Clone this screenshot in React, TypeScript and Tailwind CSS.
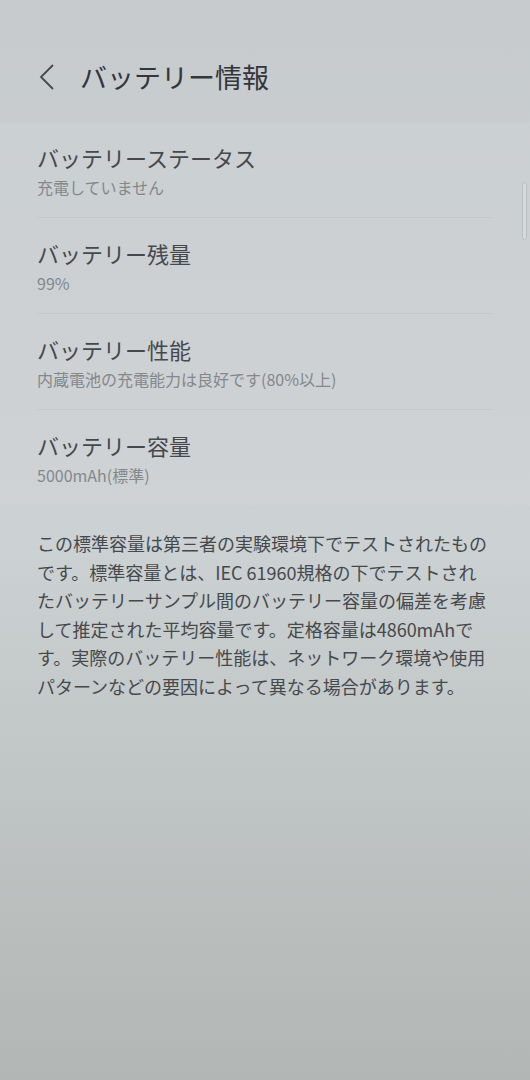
const font = { fontFamily: '"Noto Sans CJK JP", "Noto Sans", sans-serif' };

interface RowProps {
    title: string;
    sub: string;
    last?: boolean;
}

function InfoRow({ title, sub, last = false }: RowProps) {
    return (
        <div className={`pt-[21px] pb-[20px] ${last ? '' : 'border-b border-[#c3c8cb]'}`}>
            <div className="text-[22px] leading-[28px] text-[#45494c]">{title}</div>
            <div className="mt-[6px] text-[16px] leading-[20px] text-[#82888c]">{sub}</div>
        </div>
    );
}

const rows = [
    { title: 'バッテリーステータス', sub: '充電していません' },
    { title: 'バッテリー残量', sub: '99%' },
    { title: 'バッテリー性能', sub: '内蔵電池の充電能力は良好です(80%以上)' },
    { title: 'バッテリー容量', sub: '5000mAh(標準)' },
];

const lines = [
    'この標準容量は第三者の実験環境下でテストされたもの',
    'です。標準容量とは、IEC 61960規格の下でテストされ',
    'たバッテリーサンプル間のバッテリー容量の偏差を考慮',
    'して推定された平均容量です。定格容量は4860mAhで',
    'す。実際のバッテリー性能は、ネットワーク環境や使用',
    'パターンなどの要因によって異なる場合があります。',
];

export default function App() {
    return (
        <div
            className="relative w-[530px] h-[1080px] overflow-hidden bg-gradient-to-b from-[#c7cbce] via-[#ccd1d3] to-[#b2b6b4]"
            style={font}
        >
            {/* Header */}
            <div className="mt-[57px] h-[40px] flex items-center pl-[38px]">
                <svg width="18" height="28" viewBox="0 0 18 28" fill="none" className="text-[#45494c]">
                    <path d="M15 2 L3 14 L15 26" stroke="currentColor" strokeWidth="1.8" />
                </svg>
                <span className="ml-[24px] text-[27px] leading-[36px] text-[#33363a]">
                    バッテリー情報
                </span>
            </div>

            {/* List */}
            <div className="mt-[25px] px-[37px] bg-white/[0.05]">
                {rows.map((r, i) => (
                    <InfoRow key={r.title} title={r.title} sub={r.sub} last={i === rows.length - 1} />
                ))}
            </div>

            {/* Note */}
            <div className="mt-[24px] px-[37px] text-[18px] leading-[28.5px] text-[#46494c] whitespace-nowrap">
                {lines.map((l) => (
                    <div key={l}>{l}</div>
                ))}
            </div>

            {/* Scrollbar */}
            <div className="absolute right-[3px] top-[182px] w-[5px] h-[58px] rounded-full border border-[#b9bec1] bg-[#d6dadc]" />
        </div>
    );
}
